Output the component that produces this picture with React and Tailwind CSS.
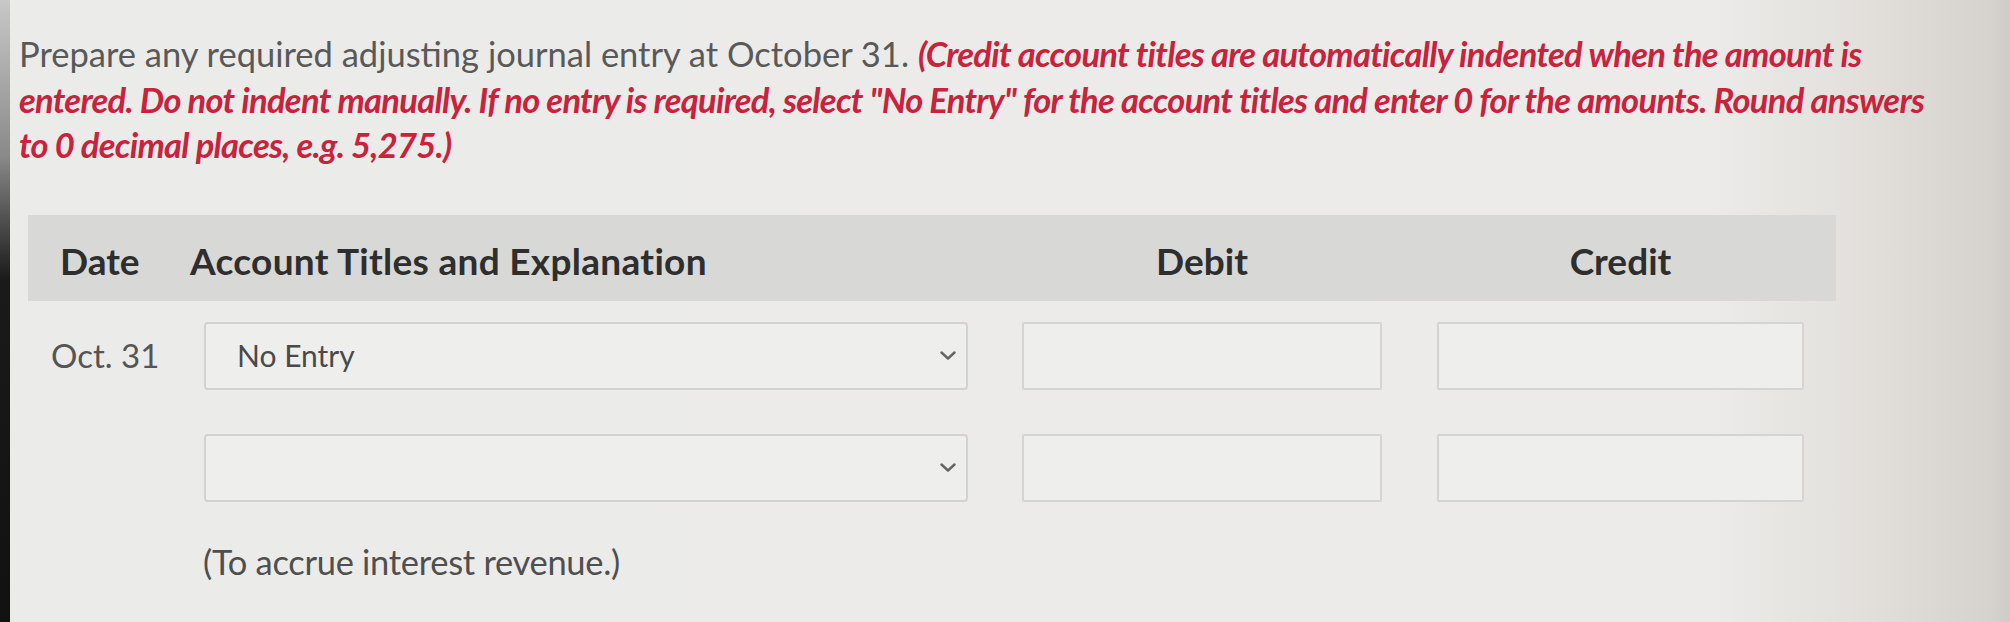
import React from "react";

function Chevron() {
  return (
    <svg width="18" height="11" viewBox="0 0 18 11" fill="none" className="shrink-0">
      <path d="M2.5 2.5 L9 8.5 L15.5 2.5" stroke="#666666" strokeWidth="2.5" strokeLinecap="round" strokeLinejoin="round" />
    </svg>
  );
}

function SelectBox({ value }) {
  return (
    <div className="w-[764px] h-[68px] border-2 border-[#d2d2d0] rounded-[4px] bg-[#eeeeec] flex items-center justify-between pl-[31px] pr-[9px]">
      <span className="text-[30px] text-[#4a4a4a]">{value}</span>
      <Chevron />
    </div>
  );
}

function InputBox({ w }) {
  return <div className={`${w} h-[68px] border-2 border-[#d4d4d2] rounded-[2px] bg-[#eeeeec]`} />;
}

export default function App() {
  return (
    <div
      className="w-[2010px] h-[622px] flex overflow-hidden bg-[linear-gradient(to_right,#ebebe9_0%,#ecebe9_85%,#e2dfdb_93%,#d6d2ce_99%,#cfcbc7_100%)]"
      style={{ fontFamily: "Lato, 'Open Sans', sans-serif" }}
    >
      <div className="w-[10px] h-full bg-[linear-gradient(to_bottom,#c8c8c8_0%,#8a8a8a_25%,#1a1a1a_45%,#111111_100%)]" />
      <div className="flex-1 flex flex-col">
        <p className="pl-[9px] pt-[31px] text-[34.5px] leading-[45.5px] text-[#595959] whitespace-nowrap">
          Prepare any required adjusting journal entry at October 31.{" "}
          <span className="italic font-bold text-[#c8223c] tracking-[-0.72px]">
            (Credit account titles are automatically indented when the amount is
            <br />
            entered. Do not indent manually. If no entry is required, select "No Entry" for the account titles and enter 0
            for the amounts. Round answers
            <br />
            to 0 decimal places, e.g. 5,275.)
          </span>
        </p>

        <div className="ml-[18px] mt-[47px] w-[1808px] h-[86px] bg-[#d8d8d6] flex items-center text-[37px] font-bold text-[#2e2e2e] pt-[6px]">
          <span className="ml-[32px] w-[130px]">Date</span>
          <span className="w-[832px] tracking-[0.3px]">Account Titles and Explanation</span>
          <span className="w-[360px] text-center">Debit</span>
          <span className="ml-[55px] w-[367px] text-center">Credit</span>
        </div>

        <div className="ml-[18px] mt-[21px] flex items-center">
          <span className="w-[176px] pl-[23px] text-[33px] text-[#555555]">Oct. 31</span>
          <SelectBox value="No Entry" />
          <div className="ml-[54px]">
            <InputBox w="w-[360px]" />
          </div>
          <div className="ml-[55px]">
            <InputBox w="w-[367px]" />
          </div>
        </div>

        <div className="ml-[18px] mt-[44px] flex items-center">
          <span className="w-[176px]" />
          <SelectBox value="" />
          <div className="ml-[54px]">
            <InputBox w="w-[360px]" />
          </div>
          <div className="ml-[55px]">
            <InputBox w="w-[367px]" />
          </div>
        </div>

        <p className="ml-[193px] mt-[34px] text-[34.5px] text-[#4f4f4f] tracking-[-0.3px]">(To accrue interest revenue.)</p>
      </div>
    </div>
  );
}
